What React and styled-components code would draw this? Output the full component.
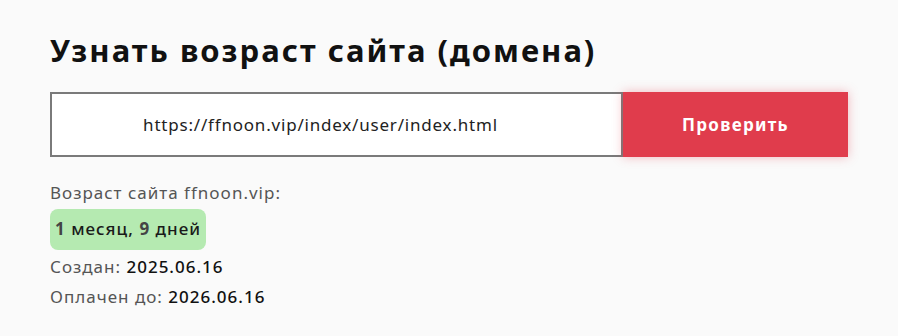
import React from 'react';
import styled, { createGlobalStyle } from 'styled-components';

const GlobalStyle = createGlobalStyle`
  html, body {
    margin: 0;
    padding: 0;
    background: #fafafa;
  }
  body {
    font-family: "Noto Sans", "Open Sans", Arial, sans-serif;
  }
`;

const Page = styled.div`
  padding: 28px 50px 0 50px;
  width: 798px;
`;

const Title = styled.h1`
  margin: 0 0 20px 0;
  font-size: 31px;
  line-height: 44px;
  font-weight: 700;
  letter-spacing: 2px;
  color: #111;
`;

const Form = styled.form`
  display: flex;
  height: 65px;
`;

const Input = styled.input`
  box-sizing: border-box;
  width: 573px;
  height: 65px;
  border: 2px solid #7a7a7a;
  background: #fff;
  font-family: inherit;
  font-size: 17px;
  letter-spacing: 0.8px;
  color: #222;
  text-align: center;
  padding: 0 32px 0 0;
  outline: none;
`;

const Button = styled.button`
  width: 225px;
  height: 65px;
  border: none;
  background: #e03c4c;
  color: #fff;
  font-family: inherit;
  font-size: 17px;
  font-weight: 700;
  letter-spacing: 1.3px;
  padding: 0;
  box-shadow: 0 0 10px rgba(224, 60, 76, 0.35);
  cursor: pointer;
`;

const Result = styled.div`
  margin-top: 21px;
  display: flex;
  flex-direction: column;
  align-items: flex-start;
  font-size: 17px;
  letter-spacing: 1px;
  color: #555;
`;

const Line = styled.div`
  line-height: 30px;
  b {
    font-weight: 500;
    color: #111;
  }
`;

const Badge = styled.div`
  margin: 1px 0 2px 0;
  padding: 0 5px 2px 5px;
  height: 41px;
  box-sizing: border-box;
  display: flex;
  align-items: center;
  background: #b5eab1;
  border-radius: 8px;
  font-size: 17px;
  font-weight: 500;
  color: #1a1a1a;
  b {
    font-weight: 700;
    color: #444;
  }
`;

export default function App() {
  return (
    <>
      <GlobalStyle />
      <Page>
        <Title>Узнать возраст сайта (домена)</Title>
        <Form onSubmit={(e) => e.preventDefault()}>
          <Input defaultValue="https://ffnoon.vip/index/user/index.html" />
          <Button type="submit">Проверить</Button>
        </Form>
        <Result>
          <Line>Возраст сайта ffnoon.vip:</Line>
          <Badge>
            <b>1</b>&nbsp;месяц,&nbsp;<b>9</b>&nbsp;дней
          </Badge>
          <Line>
            Создан: <b>2025.06.16</b>
          </Line>
          <Line>
            Оплачен до: <b>2026.06.16</b>
          </Line>
        </Result>
      </Page>
    </>
  );
}
